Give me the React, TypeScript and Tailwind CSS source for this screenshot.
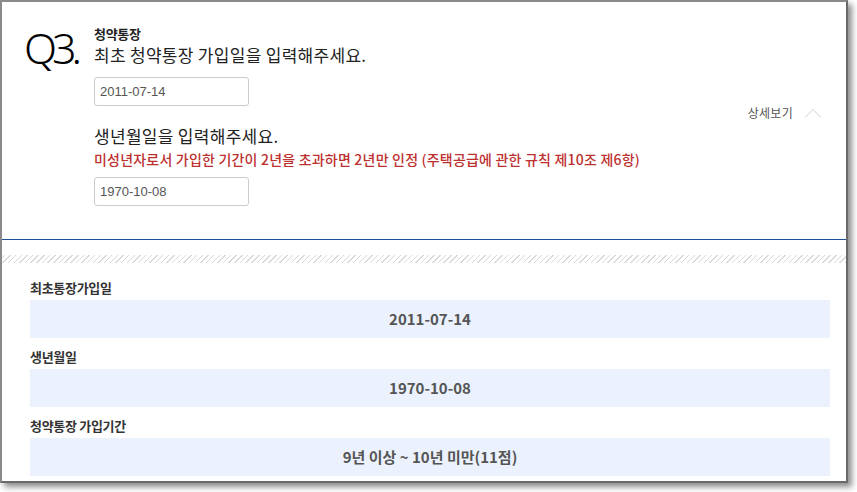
const kr = "font-['Noto_Sans_CJK_KR',sans-serif]";

function DateInput({ value }: { value: string }) {
  return (
    <input
      readOnly
      value={value}
      className="w-[155px] h-[29px] border border-[#cccccc] rounded-[3px] px-[5px] text-[13px] text-[#555555] font-['Liberation_Sans',sans-serif] outline-none"
    />
  );
}

function ResultRow({ label, value }: { label: string; value: string }) {
  return (
    <div className="flex flex-col mt-[10px] first:mt-0">
      <div className={`${kr} text-[13px] leading-[17px] font-bold text-[#333333] tracking-[-0.3px]`}>{label}</div>
      <div className="mt-[4px] w-[800px] h-[38px] bg-[#ebf2fe] flex items-center justify-center">
        <span className={`${kr} text-[15px] font-bold text-[#555555]`}>{value}</span>
      </div>
    </div>
  );
}

export default function App() {
  return (
    <div className="w-[857px] h-[492px] bg-white overflow-hidden">
      <div className="w-[848px] h-[483px] bg-white border-2 border-t-[#8a8a8a] border-l-[#8a8a8a] border-r-[#6a6a6a] border-b-[#6a6a6a] shadow-[4px_4px_6px_rgba(0,0,0,0.45)] flex flex-col">
        {/* question */}
        <div className="h-[238px] border-b border-[#1f4e9c] flex pl-[22px] pt-[24px]">
          <div className="w-[70px] font-['Noto_Sans',sans-serif] font-light text-[43px] leading-none tracking-[-5px] text-black">
            Q3.
          </div>
          <div className={`${kr} flex flex-col items-start`}>
            <div className="text-[13px] leading-[16px] font-bold text-[#222222] tracking-[-0.3px]">청약통장</div>
            <div className="mt-[2px] text-[17px] leading-[22px] text-[#222222] tracking-[0.3px]">
              최초 청약통장 가입일을 입력해주세요.
            </div>
            <div className="mt-[11px]">
              <DateInput value="2011-07-14" />
            </div>
            <div className="mt-[19px] text-[17px] leading-[22px] text-[#222222] tracking-[0.3px]">
              생년월일을 입력해주세요.
            </div>
            <div className="mt-[3px] text-[14px] leading-[18px] font-medium text-[#bd3030] tracking-[0.2px]">
              미성년자로서 가입한 기간이 2년을 초과하면 2년만 인정 (주택공급에 관한 규칙 제10조 제6항)
            </div>
            <div className="mt-[9px]">
              <DateInput value="1970-10-08" />
            </div>
          </div>
          <div className="ml-auto mt-[78px] pr-[24px] self-start flex items-center gap-[11px]">
            <span className={`${kr} text-[12px] text-[#555555] tracking-[0.3px]`}>상세보기</span>
            <svg width="18" height="10" viewBox="0 0 18 10" fill="none">
              <path d="M1 9.5 L9 1.5 L17 9.5" stroke="#cfcfcf" strokeWidth="1" />
            </svg>
          </div>
        </div>

        {/* result */}
        <div className="mt-[15px] h-[8px] bg-[image:repeating-linear-gradient(-45deg,#d9d9d9_0px,#d9d9d9_1px,transparent_1px,transparent_4px)]" />
        <div className="px-[28px] pt-[16px] flex flex-col">
          <ResultRow label="최초통장가입일" value="2011-07-14" />
          <ResultRow label="생년월일" value="1970-10-08" />
          <ResultRow label="청약통장 가입기간" value="9년 이상 ~ 10년 미만(11점)" />
        </div>
      </div>
    </div>
  );
}
